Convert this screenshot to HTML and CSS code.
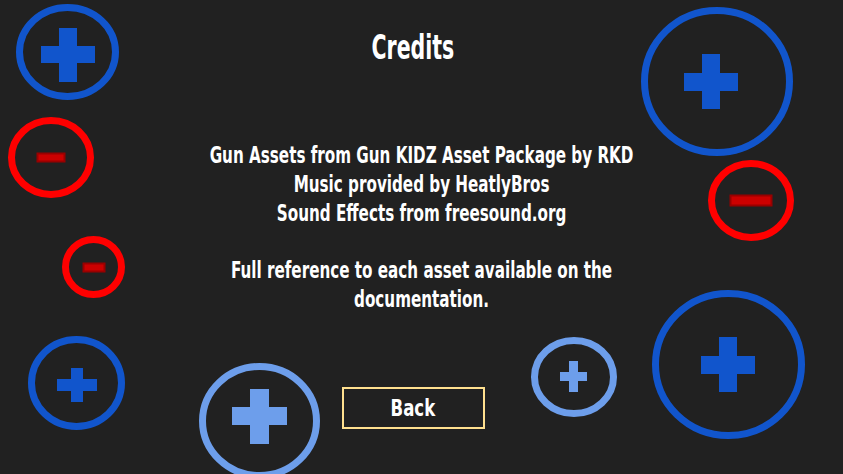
FILE: index.html
```html
<!DOCTYPE html>
<html lang="en">
<head>
<meta charset="utf-8">
<title>Credits</title>
<link rel="stylesheet" href="styles.css">
</head>
<body>
<div class="screen">
  <div class="decor" aria-hidden="true">
    <svg class="bubble b1" width="103" height="96" viewBox="0 0 103 96"><ellipse cx="51.5" cy="48" rx="48" ry="44.5" class="ring-blue"/><rect x="25" y="42" width="54" height="17" class="fill-blue"/><rect x="43" y="24" width="18" height="54" class="fill-blue"/></svg>
    <svg class="bubble b2" width="86" height="81" viewBox="0 0 86 81"><ellipse cx="43" cy="40.5" rx="39.5" ry="37" class="ring-red"/><rect x="29.5" y="36.5" width="27" height="8" class="minus"/></svg>
    <svg class="bubble b3" width="63" height="62" viewBox="0 0 63 62"><ellipse cx="31.5" cy="31" rx="28" ry="27.5" class="ring-red"/><rect x="21.5" y="27.5" width="21" height="8" class="minus"/></svg>
    <svg class="bubble b4" width="152" height="149" viewBox="0 0 152 149"><ellipse cx="76" cy="74.5" rx="72.5" ry="71" class="ring-blue"/><rect x="43" y="66" width="54" height="18" class="fill-blue"/><rect x="61" y="47" width="18" height="55" class="fill-blue"/></svg>
    <svg class="bubble b5" width="86" height="81" viewBox="0 0 86 81"><ellipse cx="43" cy="40.5" rx="39.5" ry="37" class="ring-red"/><rect x="22.5" y="35.5" width="41" height="10" class="minus"/></svg>
    <svg class="bubble b6" width="121" height="116" viewBox="0 0 121 116"><ellipse cx="60.5" cy="58" rx="57" ry="54.5" class="ring-light"/><rect x="33" y="44" width="55" height="18" class="fill-light"/><rect x="51" y="26" width="19" height="55" class="fill-light"/></svg>
    <svg class="bubble b7" width="86" height="80" viewBox="0 0 86 80"><ellipse cx="43" cy="40" rx="39.5" ry="36.5" class="ring-light"/><rect x="29" y="35" width="27" height="9" class="fill-light"/><rect x="38" y="24" width="9" height="31" class="fill-light"/></svg>
    <svg class="bubble b8" width="153" height="149" viewBox="0 0 153 149"><ellipse cx="76.5" cy="74.5" rx="73" ry="71" class="ring-blue"/><rect x="49" y="66" width="54" height="18" class="fill-blue"/><rect x="67" y="47" width="18" height="55" class="fill-blue"/></svg>
    <svg class="bubble b9" width="97" height="94" viewBox="0 0 97 94"><ellipse cx="48.5" cy="47" rx="45" ry="43.5" class="ring-blue"/><rect x="29" y="43" width="40" height="12" class="fill-blue"/><rect x="43" y="32" width="12" height="34" class="fill-blue"/></svg>
  </div>

  <main class="content">
    <h1 class="title">Credits</h1>
    <div class="credits">
      <p class="para">Gun Assets from Gun KIDZ Asset Package by RKD<br>Music provided by HeatlyBros<br>Sound Effects from freesound.org</p>
      <p class="para gap">Full reference to each asset available on the<br>documentation.</p>
    </div>
    <button class="back" type="button"><span class="back-label">Back</span></button>
  </main>
</div>
</body>
</html>
```

FILE: styles.css
```css
html, body {
  margin: 0;
  padding: 0;
  height: 100%;
  background: #212121;
  overflow: hidden;
}

.screen {
  position: relative;
  width: 843px;
  height: 474px;
  background: #212121;
  font-family: "DejaVu Sans Condensed", "DejaVu Sans", sans-serif;
  font-weight: bold;
  color: #ffffff;
}

.decor {
  position: absolute;
  inset: 0;
}

.bubble {
  position: absolute;
  display: block;
  overflow: visible;
}

.b1 { left: 16px; top: 4px; }
.b2 { left: 8px; top: 117px; }
.b3 { left: 62px; top: 236px; }
.b4 { left: 641px; top: 7px; }
.b5 { left: 708px; top: 160px; }
.b6 { left: 199px; top: 363px; }
.b7 { left: 531px; top: 337px; }
.b8 { left: 652px; top: 290px; }
.b9 { left: 28px; top: 336px; }

.ring-blue { fill: none; stroke: #1155cc; stroke-width: 7; }
.ring-light { fill: none; stroke: #6d9eeb; stroke-width: 7; }
.ring-red { fill: none; stroke: #ff0000; stroke-width: 7; }
.fill-blue { fill: #1155cc; }
.fill-light { fill: #6d9eeb; }
.minus { fill: #cc0000; stroke: #990000; stroke-width: 2; }

.content {
  position: relative;
  display: flex;
  flex-direction: column;
  align-items: center;
  padding-top: 28px;
}

.title {
  margin: 0 17px 0 0;
  font-size: 33px;
  line-height: 40px;
  font-weight: bold;
  transform: scaleX(0.69);
}

.credits {
  margin-top: 73px;
  text-align: center;
  font-size: 22.5px;
  line-height: 28.8px;
  white-space: nowrap;
  transform: scaleX(0.75);
}

.para {
  margin: 0;
}

.para.gap {
  margin-top: 28.8px;
}

.back {
  margin: 73px 17px 0 0;
  width: 143px;
  height: 42px;
  box-sizing: border-box;
  border: 2px solid #ffe08f;
  background: transparent;
  color: #ffffff;
  font-family: "DejaVu Sans Condensed", "DejaVu Sans", sans-serif;
  font-weight: bold;
  font-size: 23px;
  padding: 0;
  display: flex;
  align-items: center;
  justify-content: center;
}

.back-label {
  display: inline-block;
  transform: scaleX(0.8);
}
```
